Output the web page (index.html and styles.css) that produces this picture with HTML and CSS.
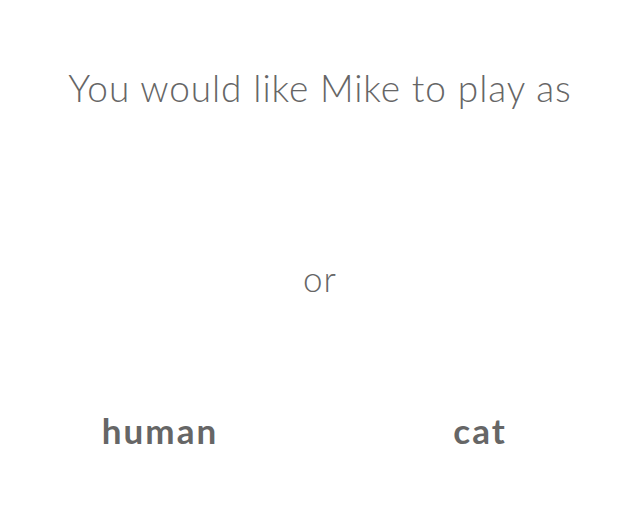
FILE: index.html
```html
<!DOCTYPE html>
<html>
<head>
<meta charset="utf-8">
<link rel="stylesheet" href="styles.css">
</head>
<body>
<main class="page">
  <h1 class="title">You would like Mike to play as</h1>
  <p class="or">or</p>
  <div class="choices">
    <button class="choice">human</button>
    <button class="choice">cat</button>
  </div>
</main>
</body>
</html>
```
FILE: styles.css
```css
html, body {
  margin: 0;
  padding: 0;
  background: #ffffff;
}
.page {
  width: 640px;
  height: 520px;
  display: flex;
  flex-direction: column;
  align-items: center;
  font-family: Lato, "Open Sans", sans-serif;
  color: #666666;
}
.title {
  margin: 64px 0 0;
  font-size: 37px;
  font-weight: 300;
  line-height: 48px;
  letter-spacing: 0.9px;
}
.or {
  margin: 144px 0 0;
  font-size: 35px;
  font-weight: 300;
  line-height: 44px;
  letter-spacing: 1px;
}
.choices {
  margin-top: 108px;
  width: 100%;
  display: grid;
  grid-template-columns: 1fr 1fr;
}
.choice {
  border: none;
  background: none;
  padding: 0;
  font-family: inherit;
  font-size: 35px;
  font-weight: 700;
  color: #666666;
  line-height: 44px;
  letter-spacing: 2px;
  text-align: center;
}
```
